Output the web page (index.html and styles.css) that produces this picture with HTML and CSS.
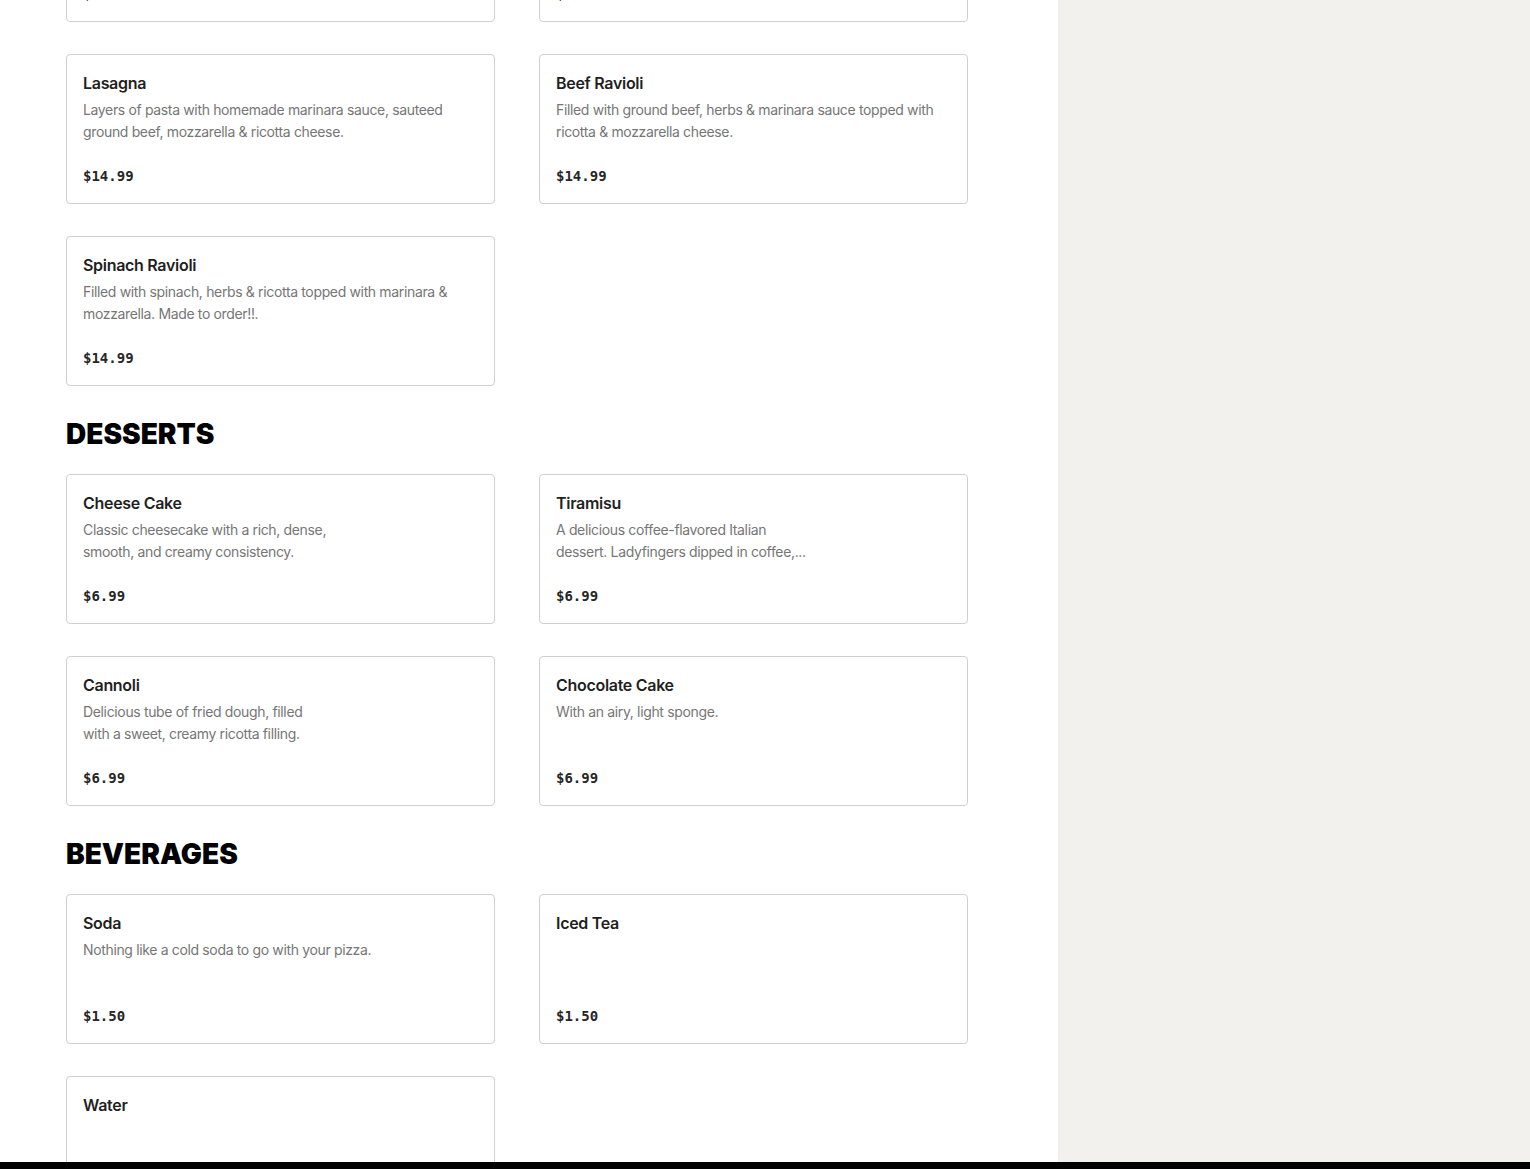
FILE: index.html
```html
<!DOCTYPE html>
<html lang="en">
<head>
<meta charset="utf-8">
<title>Menu</title>
<link rel="stylesheet" href="styles.css">
</head>
<body>
<div class="layout">
  <main class="menu">
    <section class="section section-scrolled">
      <div class="grid">
        <div class="card">
          <h3 class="item-name">Baked Ziti</h3>
          <p class="item-desc">Ziti pasta baked with marinara sauce, ricotta &amp; mozzarella cheese.</p>
          <span class="item-price">$13.99</span>
        </div>
        <div class="card">
          <h3 class="item-name">Chicken Parmesan</h3>
          <p class="item-desc">Breaded chicken breast topped with marinara &amp; mozzarella, served over spaghetti.</p>
          <span class="item-price">$15.99</span>
        </div>
        <div class="card">
          <h3 class="item-name">Lasagna</h3>
          <p class="item-desc">Layers of pasta with homemade marinara sauce, sauteed ground beef, mozzarella &amp; ricotta cheese.</p>
          <span class="item-price">$14.99</span>
        </div>
        <div class="card">
          <h3 class="item-name">Beef Ravioli</h3>
          <p class="item-desc">Filled with ground beef, herbs &amp; marinara sauce topped with ricotta &amp; mozzarella cheese.</p>
          <span class="item-price">$14.99</span>
        </div>
        <div class="card">
          <h3 class="item-name">Spinach Ravioli</h3>
          <p class="item-desc">Filled with spinach, herbs &amp; ricotta topped with marinara &amp; mozzarella. Made to order!!.</p>
          <span class="item-price">$14.99</span>
        </div>
      </div>
    </section>

    <section class="section">
      <h2 class="section-title">DESSERTS</h2>
      <div class="grid">
        <div class="card">
          <h3 class="item-name">Cheese Cake</h3>
          <p class="item-desc">Classic cheesecake with a rich, dense,<br>smooth, and creamy consistency.</p>
          <span class="item-price">$6.99</span>
        </div>
        <div class="card">
          <h3 class="item-name">Tiramisu</h3>
          <p class="item-desc">A delicious coffee-flavored Italian<br>dessert. Ladyfingers dipped in coffee,...</p>
          <span class="item-price">$6.99</span>
        </div>
        <div class="card">
          <h3 class="item-name">Cannoli</h3>
          <p class="item-desc">Delicious tube of fried dough, filled<br>with a sweet, creamy ricotta filling.</p>
          <span class="item-price">$6.99</span>
        </div>
        <div class="card">
          <h3 class="item-name">Chocolate Cake</h3>
          <p class="item-desc">With an airy, light sponge.</p>
          <span class="item-price">$6.99</span>
        </div>
      </div>
    </section>

    <section class="section">
      <h2 class="section-title">BEVERAGES</h2>
      <div class="grid">
        <div class="card">
          <h3 class="item-name">Soda</h3>
          <p class="item-desc">Nothing like a cold soda to go with your pizza.</p>
          <span class="item-price">$1.50</span>
        </div>
        <div class="card">
          <h3 class="item-name">Iced Tea</h3>
          <p class="item-desc"></p>
          <span class="item-price">$1.50</span>
        </div>
        <div class="card">
          <h3 class="item-name">Water</h3>
          <p class="item-desc"></p>
          <span class="item-price">$1.00</span>
        </div>
      </div>
    </section>
  </main>
  <aside class="side"></aside>
</div>
<div class="bottom-bar"></div>
</body>
</html>
```

FILE: styles.css
```css
html, body {
  margin: 0;
  padding: 0;
}
body {
  font-family: Inter, "Noto Sans", sans-serif;
  background: #ffffff;
  color: #191919;
  height: 1169px;
  overflow: hidden;
}
.layout {
  display: grid;
  grid-template-columns: 1058px 1fr;
  min-height: 1169px;
}
.menu {
  padding: 0 0 0 66px;
  overflow: hidden;
}
.side {
  background: #f2f1ed;
}
.section-scrolled {
  margin-top: -128px;
}
.section-title {
  margin: 31px 0 23px;
  font-family: Inter, sans-serif;
  font-weight: 900;
  font-size: 28px;
  line-height: 34px;
  letter-spacing: 0;
  color: #000;
}
.grid {
  display: grid;
  grid-template-columns: 429px 429px;
  column-gap: 44px;
  row-gap: 32px;
}
.card {
  box-sizing: border-box;
  height: 150px;
  border: 1px solid #d0d0d0;
  border-radius: 4px;
  padding: 16px 16px 17px 16px;
  display: flex;
  flex-direction: column;
}
.item-name {
  margin: 0;
  font-size: 16px;
  line-height: 24px;
  font-weight: 600;
  letter-spacing: -0.3px;
  color: #1f1f1f;
}
.item-desc {
  margin: 4px 0 0;
  font-size: 14px;
  line-height: 22px;
  letter-spacing: -0.35px;
  color: #767676;
}
.item-price {
  margin-top: auto;
  font-family: "DejaVu Sans Mono", "Liberation Mono", monospace;
  font-weight: bold;
  font-size: 14px;
  line-height: 20px;
  color: #262626;
}
.bottom-bar {
  position: fixed;
  left: 0;
  right: 0;
  bottom: 0;
  height: 7px;
  background: #000;
}
```
